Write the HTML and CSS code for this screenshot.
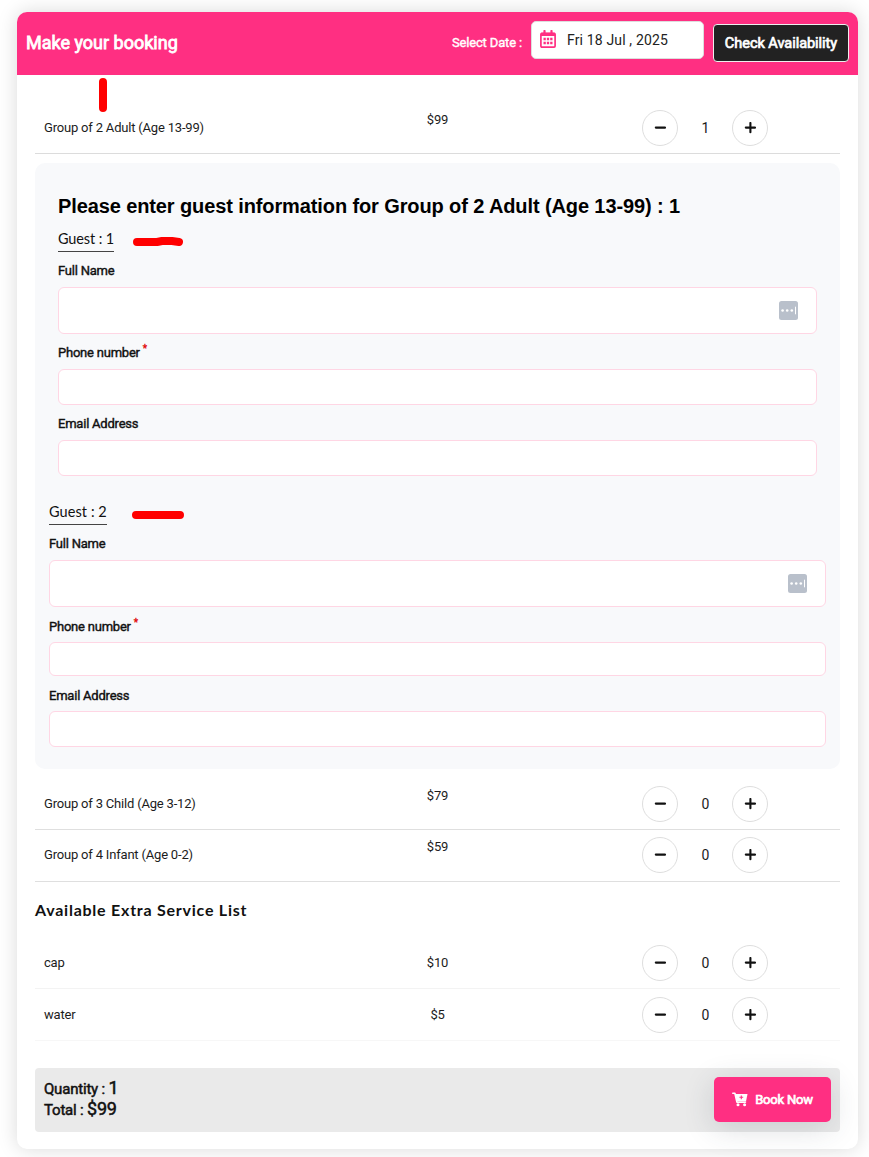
FILE: index.html
```html
<!DOCTYPE html>
<html lang="en">
<head>
<meta charset="utf-8">
<title>Make your booking</title>
<link rel="stylesheet" href="styles.css">
</head>
<body>
<svg width="0" height="0" class="defs">
  <symbol id="minus" viewBox="0 0 12 12"><path d="M1.8 5.6h9.2" stroke="currentColor" stroke-width="2.1" stroke-linecap="round"/></symbol>
  <symbol id="plus" viewBox="0 0 12 12"><path d="M1.8 5.6h9.2M6.4 1v9.2" stroke="currentColor" stroke-width="2.1" stroke-linecap="round"/></symbol>
  <symbol id="fill" viewBox="0 0 19 19"><rect width="19" height="19" rx="2.5" fill="#b9c0cb"/><circle cx="3.6" cy="9.5" r="1.3" fill="#fff"/><circle cx="8.2" cy="9.5" r="1.3" fill="#fff"/><circle cx="12.8" cy="9.5" r="1.3" fill="#fff"/><path d="M16.5 5.7v7.6" stroke="#fff" stroke-width="1"/></symbol>
</svg>
<main class="card">
  <header class="head">
    <h1 class="title"><span>Make your booking</span></h1>
    <span class="date-label">Select Date :</span>
    <div class="date">
      <svg class="cal" viewBox="0 0 16 18"><path d="M4.5 1v3M11.5 1v3" stroke="#ff2f82" stroke-width="2.2" stroke-linecap="round"/><rect x=".9" y="3.3" width="14.2" height="13.8" rx="1" fill="#fff" stroke="#ff2f82" stroke-width="1.7"/><path d="M1 4.4h14" stroke="#ff2f82" stroke-width="3.2"/><path d="M3.5 8.9h9M3.5 12.9h9" stroke="#ff2f82" stroke-width="2.5" stroke-dasharray="2.3 1.05"/></svg>
      <span>Fri 18 Jul , 2025</span>
    </div>
    <button class="check">Check Availability</button>
  </header>
  <div class="body">
    <div class="row first">
      <span class="name">Group of 2 Adult (Age 13-99)</span><span class="price up">$99</span>
      <div class="qty"><button><svg><use href="#minus"/></svg></button><span>1</span><button><svg><use href="#plus"/></svg></button></div>
    </div>
    <section class="guests">
      <div class="guest one">
        <h2 class="info">Please enter guest information for Group of 2 Adult (Age 13-99) : 1</h2>
        <h3 class="guest-no">Guest : 1</h3>
        <label>Full Name</label>
        <div class="input tall"><svg><use href="#fill"/></svg></div>
        <label>Phone number <sup>*</sup></label>
        <div class="input"></div>
        <label>Email Address</label>
        <div class="input"></div>
      </div>
      <div class="guest two">
        <h3 class="guest-no">Guest : 2</h3>
        <label>Full Name</label>
        <div class="input tall"><svg><use href="#fill"/></svg></div>
        <label class="phone">Phone number <sup>*</sup></label>
        <div class="input short"></div>
        <label>Email Address</label>
        <div class="input"></div>
      </div>
    </section>
    <div class="row child">
      <span class="name">Group of 3 Child (Age 3-12)</span><span class="price up">$79</span>
      <div class="qty"><button><svg><use href="#minus"/></svg></button><span>0</span><button><svg><use href="#plus"/></svg></button></div>
    </div>
    <div class="row infant">
      <span class="name">Group of 4 Infant (Age 0-2)</span><span class="price up">$59</span>
      <div class="qty"><button><svg><use href="#minus"/></svg></button><span>0</span><button><svg><use href="#plus"/></svg></button></div>
    </div>
    <h2 class="extra"><span>Available Extra Service List</span></h2>
    <div class="row light">
      <span class="name">cap</span><span class="price">$10</span>
      <div class="qty"><button><svg><use href="#minus"/></svg></button><span>0</span><button><svg><use href="#plus"/></svg></button></div>
    </div>
    <div class="row light last">
      <span class="name">water</span><span class="price">$5</span>
      <div class="qty"><button><svg><use href="#minus"/></svg></button><span>0</span><button><svg><use href="#plus"/></svg></button></div>
    </div>
    <footer class="total">
      <div class="sums"><div>Quantity : <b>1</b></div><div>Total : <b>$99</b></div></div>
      <button class="book">
        <svg viewBox="0 0 16 15"><path d="M.8 1.2h2.1l2 8.9h8.6" fill="none" stroke="#fff" stroke-width="1.6" stroke-linecap="round" stroke-linejoin="round"/><path d="M3.3 2h12.2l-1.4 6.9H4.8z" fill="#fff"/><circle cx="6" cy="12.7" r="1.5" fill="#fff"/><circle cx="12.6" cy="12.7" r="1.5" fill="#fff"/><path d="M9.3 3.4v3.8M7.4 5.3h3.8" stroke="#ff2f82" stroke-width="1.1"/></svg>
        <span>Book Now</span>
      </button>
    </footer>
  </div>
</main>
<svg class="marks" width="869" height="1157" fill="none" stroke="#f00" stroke-width="8" stroke-linecap="round" stroke-linejoin="round">
  <path d="M103 82v26M137 242h20l5-1h10l7 1M136 515h44"/>
</svg>
</body>
</html>
```
FILE: styles.css
```css
* { box-sizing: border-box; }
html, body { height: 1157px; overflow: hidden; }
body { margin: 0; padding: 12px 11px 8px 17px; background: #fff; font-family: Roboto, sans-serif; font-size: 13px; color: #1c1c1c; }
h1, h2, h3 { margin: 0; }
button { font-family: inherit; padding: 0; }
.defs { position: absolute; }
.marks { position: absolute; left: 0; top: 0; pointer-events: none; }
.card { height: 1137px; border-radius: 10px; background: #fff; box-shadow: 0 0 20px rgba(0, 0, 0, .15); }
.head { height: 63px; display: flex; align-items: flex-start; padding: 0 9px; background: #ff2f82; border-radius: 10px 10px 0 0; color: #fff; }
.title { flex: 1; font-size: 18px; font-weight: 400; line-height: 62px; -webkit-text-stroke: .8px #fff; }
.date-label { font-size: 13px; line-height: 61px; letter-spacing: -.15px; -webkit-text-stroke: .4px #fff; margin-right: 9px; }
.date { width: 173px; height: 38px; margin: 9px 9px 0 0; padding: 0 0 0 8px; background: #fff; border: 1px solid #ddd; border-radius: 5px; display: flex; align-items: center; gap: 11px; color: #222; font-size: 14px; letter-spacing: .15px; }
.cal { width: 16px; height: 18px; margin-top: -2px; }
.check { width: 136px; height: 38px; margin-top: 12px; background: #222; color: #fff; border: 1px solid #eee; border-radius: 4px; font-size: 14.5px; letter-spacing: -.03px; -webkit-text-stroke: .7px #fff; white-space: nowrap; }
.body { padding: 27px 18px 0; }
.row { height: 52px; display: grid; grid-template-columns: 322px 161px 1fr; align-items: center; border-bottom: 1px solid #dcdcdc; }
.name { padding-left: 9px; letter-spacing: -.19px; }
.price { text-align: center; letter-spacing: -.2px; }
.up { padding-bottom: 16px; }
.child, .infant { border-bottom-color: #dfdfdf; }
.infant { padding-bottom: 2px; }
.light { border-bottom-color: #f3f3f3; }
.last { border-bottom-color: #f7f7f7; }
.qty { display: flex; align-items: center; padding-left: 124px; font-size: 14px; }
.qty span { width: 54px; text-align: center; padding-left: 1px; }
.qty button { width: 36px; height: 36px; border: 1px solid #dedede; border-radius: 50%; background: #fff; color: #111; display: flex; align-items: center; justify-content: center; }
.qty svg { width: 12px; height: 12px; }
.guests { height: 606px; margin: 9px 0; border-radius: 10px; background: #f8f9fb; }
.guest { display: flex; flex-direction: column; align-items: stretch; color: #111; }
.one { padding: 28px 23px 0; height: 338px; }
.two { padding: 0 14px; }
.info { font: bold 20px/30px "Liberation Sans", sans-serif; letter-spacing: -.11px; color: #000; white-space: nowrap; }
.guest-no { align-self: flex-start; height: 23px; margin: 0; border-bottom: 1px solid #444; font: 400 14.5px/22px Lato, sans-serif; letter-spacing: .08px; white-space: nowrap; }
.one .guest-no { margin-top: 8px; line-height: 20px; letter-spacing: -.12px; }
.two .guest-no { height: 24px; }
.guest label { height: 35px; padding-top: 4px; line-height: 30px; letter-spacing: -.22px; -webkit-text-stroke: .4px #111; }
.guest .phone { padding-top: 5px; }
.guest .short + label { padding-top: 5px; }
.guest sup { font-size: 10px; line-height: 0; color: #e00000; -webkit-text-stroke: .3px #e00000; }
.input { height: 36px; border: 1px solid #ffd6e4; border-radius: 6px; background: #fff; display: flex; align-items: center; justify-content: flex-end; padding-right: 18px; }
.input.tall { height: 47px; }
.input.short { height: 34px; }
.input svg { width: 19px; height: 19px; }
.extra { height: 55px; font: 700 16px/55px Lato, sans-serif; letter-spacing: .76px; color: #111; }
.total { margin-top: 27px; height: 64px; border-radius: 4px; background: #eaeaea; padding: 9px; display: flex; justify-content: space-between; }
.sums { padding-top: 2px; color: #111; font-size: 15px; letter-spacing: -.2px; -webkit-text-stroke: .5px #111; }
.sums div { height: 21px; line-height: 21px; }
.sums b { font-size: 18px; font-weight: 400; line-height: 1; }
.book { width: 117px; height: 45px; border: 0; border-radius: 5px; background: #ff2f82; color: #fff; font-size: 13px; box-shadow: 0 6px 30px rgba(50, 60, 80, .18); display: flex; align-items: center; justify-content: center; gap: 7px; }
.book svg { width: 16px; height: 15px; }
.book span { letter-spacing: -.2px; -webkit-text-stroke: .7px #fff; }
```
